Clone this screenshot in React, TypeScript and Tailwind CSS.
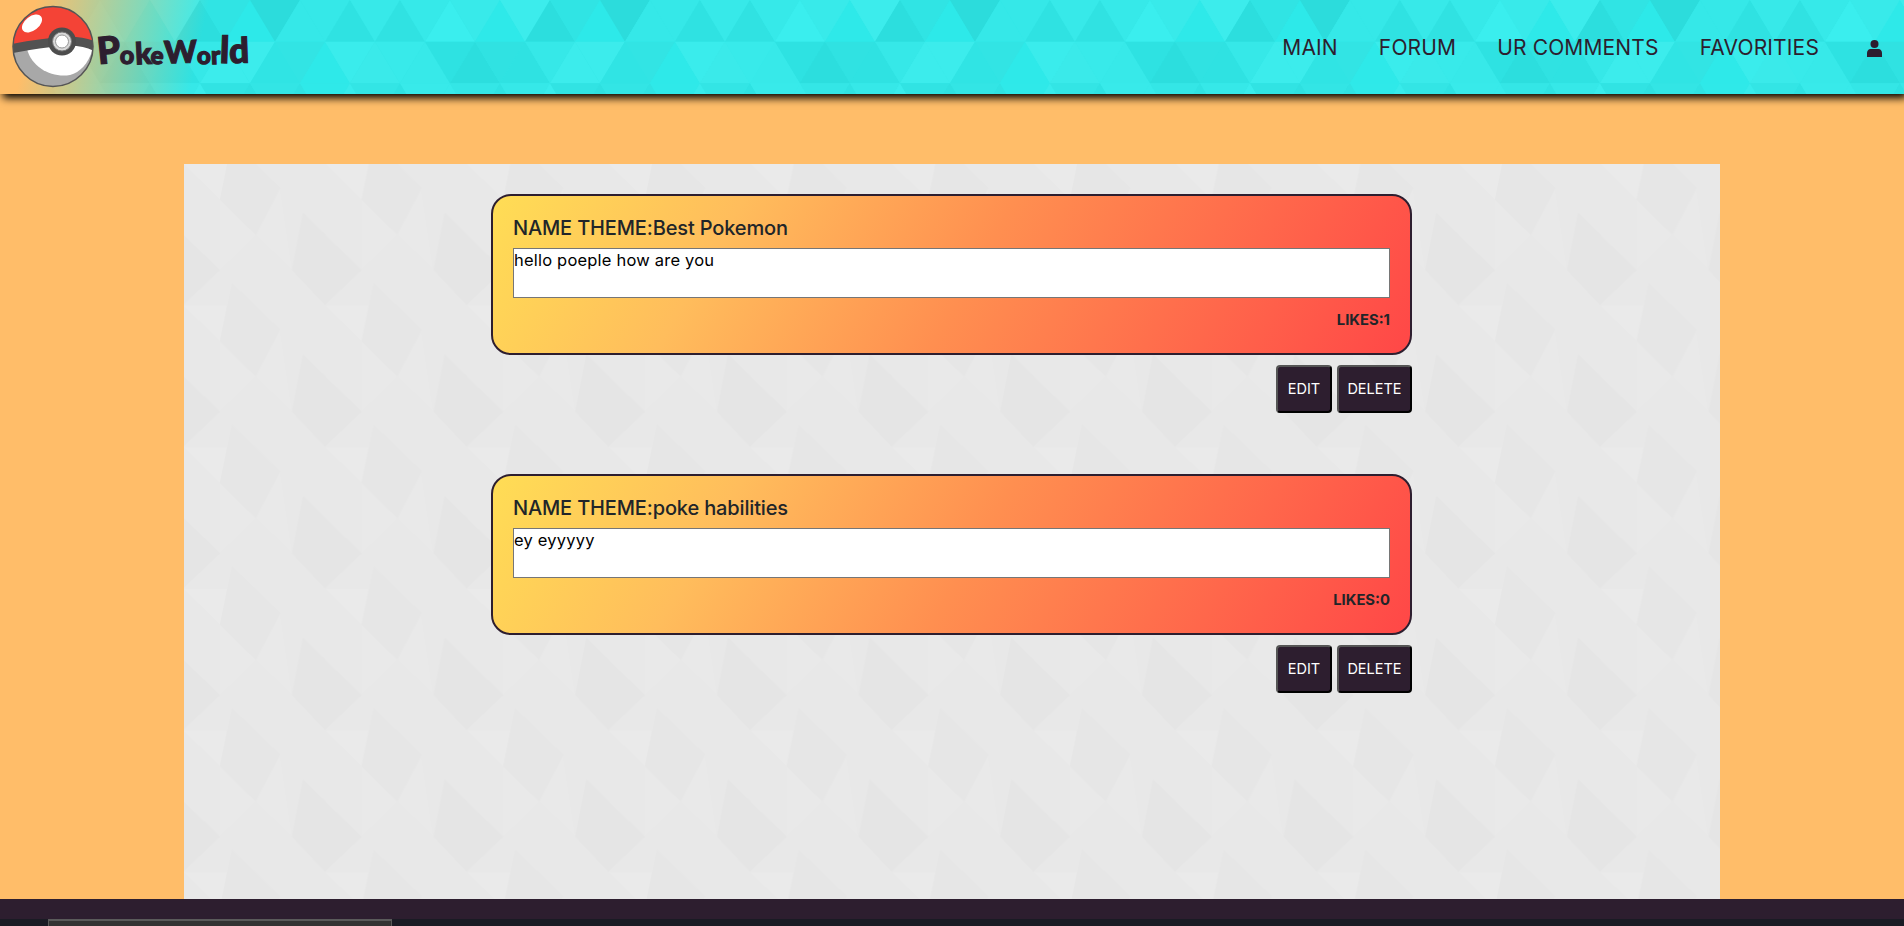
const NAV = ["MAIN", "FORUM", "UR COMMENTS", "FAVORITIES"];

const THEMES = [
  { name: "Best Pokemon", text: "hello poeple how are you", likes: 1 },
  { name: "poke habilities", text: "ey eyyyyy", likes: 0 },
];

const LETTERS = [
  { c: "P", cls: "text-[37px] -rotate-6" },
  { c: "o", cls: "text-[25px] rotate-3" },
  { c: "k", cls: "text-[30px] -rotate-3" },
  { c: "e", cls: "text-[24px] rotate-6" },
  { c: "W", cls: "text-[31px] -rotate-2" },
  { c: "o", cls: "text-[24px] rotate-2" },
  { c: "r", cls: "text-[25px] -rotate-2" },
  { c: "l", cls: "text-[37px] rotate-2" },
  { c: "d", cls: "text-[35px] -rotate-2" },
];

// header tile read off the reference: [up triangle, down triangle] per step, 7 steps wide
const TILE = [
  [
    ["#30e2e2", "#36e9e9"],
    ["#3aeeee", "#38eaea"],
    ["#2ee9e9", "#3cecec"],
    ["#2cdede", "#30e4e4"],
    ["#2de9e9", "#2cdcdc"],
    ["#35e8e8", "#35e8e8"],
    ["#2fe2e2", "#37e9e9"],
  ],
  [
    ["#3aeaea", "#38eaea"],
    ["#37e9e9", "#2ee2e2"],
    ["#2cdede", "#30e2e2"],
    ["#2fe2e2", "#36e8e8"],
    ["#3cecec", "#3cecec"],
    ["#30e4e4", "#32e4e4"],
    ["#2ee9e9", "#3aecec"],
  ],
  [
    ["#2fe2e2", "#38eaea"],
    ["#38eaea", "#34e6e6"],
    ["#30e2e2", "#36e8e8"],
    ["#3aecec", "#31e3e3"],
    ["#2fe0e0", "#33e5e5"],
    ["#30e2e2", "#2fe9e9"],
    ["#38ebeb", "#33e5e5"],
  ],
];

// header triangles, side 50 and height 41.67
function triangles() {
  const out: { points: string; fill: string }[] = [];
  const h = 125 / 3;
  for (let row = 0; row < 3; row++) {
    for (let i = -1; i < 40; i++) {
      const x = i * 50 - 25;
      const y0 = row * h;
      const y1 = y0 + h;
      const cell = TILE[row][(i + 76) % 7];
      if (row % 2 === 0) {
        out.push({ points: `${x},${y1} ${x + 25},${y0} ${x + 50},${y1}`, fill: cell[0] });
        out.push({ points: `${x + 25},${y0} ${x + 75},${y0} ${x + 50},${y1}`, fill: cell[1] });
      } else {
        out.push({ points: `${x - 25},${y1} ${x},${y0} ${x + 25},${y1}`, fill: cell[0] });
        out.push({ points: `${x},${y0} ${x + 50},${y0} ${x + 25},${y1}`, fill: cell[1] });
      }
    }
  }
  return out;
}

function HeaderPattern() {
  return (
    <svg viewBox="0 0 1904 94" className="absolute inset-0 w-full h-full" aria-hidden="true">
      <rect width="1904" height="94" fill="#33e6e6" />
      {Array.from({ length: 3 }).map((_, k) => (
        <g key={k} transform={`translate(${k * 700} 0)`}>
          {triangles().map((t, i) => (
            <polygon key={i} points={t.points} fill={t.fill} />
          ))}
        </g>
      ))}
    </svg>
  );
}

function PanelPattern() {
  return (
    <svg className="absolute inset-0 w-full h-full" aria-hidden="true">
      <defs>
        <pattern id="panel-tile" width="141.67" height="141.67" patternUnits="userSpaceOnUse">
          <rect width="142" height="142" fill="#e8e8e8" />
          <polygon points="0,0 36,36 43,0" fill="#eaeaea" />
          <polygon points="119,49 178,106 141,141 108,106" fill="#e5e5e5" />
          <polygon points="-23,49 36,106 -1,141 -34,106" fill="#e5e5e5" />
          <polygon points="48,-23 96,24 71,71 36,36" fill="#e6e6e6" />
          <polygon points="48,119 96,166 71,213 36,178" fill="#e6e6e6" />
          <polygon points="72,71 108,106 96,25" fill="#e9e9e9" />
          <polygon points="36,36 72,71 36,106" fill="#e9e9e9" />
        </pattern>
      </defs>
      <rect width="100%" height="100%" fill="url(#panel-tile)" />
    </svg>
  );
}

function Pokeball() {
  return (
    <svg viewBox="0 0 94 94" className="w-[94px] h-[94px] shrink-0" aria-hidden="true">
      <defs>
        <clipPath id="ball-clip">
          <circle cx="53" cy="46.5" r="40" />
        </clipPath>
      </defs>
      <g clipPath="url(#ball-clip)">
        <rect width="94" height="94" fill="#a8a8a8" />
        <path d="M0 0H94V48Q62 36 13 48H0Z" fill="#f44336" />
        <path d="M27 49C32 68 52 78 70 75C80 72 88 65 93 48L62 40Z" fill="#ffffff" />
        <path d="M10 49Q40 43 62 41.5T96 47" fill="none" stroke="#525252" strokeWidth="9" />
      </g>
      <ellipse cx="32" cy="23.5" rx="11.5" ry="7" transform="rotate(-38 32 23.5)" fill="#ffffff" />
      <circle cx="62" cy="41.5" r="14" fill="#4d4d4d" />
      <circle cx="62" cy="41.5" r="9.5" fill="#d8d8d8" stroke="#777777" strokeWidth="1" />
      <circle cx="62" cy="41.5" r="6.5" fill="#ffffff" stroke="#999999" strokeWidth="1" />
      <circle cx="53" cy="46.5" r="40" fill="none" stroke="#555555" strokeWidth="1.5" />
    </svg>
  );
}

function UserIcon() {
  return (
    <svg viewBox="0 0 15 17" className="w-[15px] h-[17px]" fill="#2d1e2f" aria-hidden="true">
      <circle cx="7.5" cy="4" r="4" />
      <path d="M3.5 9H11.5C13.5 9 15 11 15 13V17H0V13C0 11 1.5 9 3.5 9Z" />
    </svg>
  );
}

function ThemeCard({ name, text, likes }: { name: string; text: string; likes: number }) {
  return (
    <div className="flex flex-col w-[921px]">
      <div className="flex flex-col h-[161px] px-[20px] pt-[19px] rounded-[20px] border-2 border-[#2d1e2f] bg-[linear-gradient(120deg,#ffdd55_0%,#ffbd5c_25%,#ff8f50_52%,#ff4747_100%)]">
        <h3 className="h-[33px] text-[20px] leading-[26px] font-medium tracking-[-0.15px] text-[#212529]">
          NAME THEME:{name}
        </h3>
        <textarea
          readOnly
          value={text}
          className="block w-full h-[50px] resize-none border border-[#767676] bg-white text-[16.5px] leading-[22px] tracking-[0.2px] text-black outline-none"
        />
        <p className="mt-[11px] text-right text-[14.8px] leading-[22px] font-bold text-[#212529]">
          LIKES:{likes}
        </p>
      </div>
      <div className="flex justify-end gap-[5px] mt-[10px]">
        <button className="h-[48px] w-[56px] rounded-[4px] border-2 border-t-[#555555] border-l-[#555555] border-b-black border-r-black bg-[#2d1e2f] text-[14.5px] text-white">
          EDIT
        </button>
        <button className="h-[48px] w-[75px] rounded-[4px] border-2 border-t-[#555555] border-l-[#555555] border-b-black border-r-black bg-[#2d1e2f] text-[14.5px] text-white">
          DELETE
        </button>
      </div>
    </div>
  );
}

export default function App() {
  return (
    <div className="flex flex-col h-screen overflow-hidden bg-[#ffbd69] font-['Inter','Liberation_Sans',sans-serif]">
      <header className="relative z-10 flex items-center justify-between shrink-0 h-[94px] pr-[22px] shadow-[3px_4px_8px_#000]">
        <HeaderPattern />
        <div className="absolute inset-0 bg-[linear-gradient(102deg,#ffbd69_35px,#ffbd6900_205px)]" />
        <div className="relative flex items-center">
          <Pokeball />
          <div className="flex items-end h-[42px] -mt-[3px] ml-[3px] font-['Lato',sans-serif] font-black text-[#2d1e2f] leading-none [-webkit-text-stroke:1.2px_#2d1e2f]">
            {LETTERS.map((l, i) => (
              <span key={i} className={`inline-block ${l.cls}`}>
                {l.c}
              </span>
            ))}
          </div>
        </div>
        <nav className="relative flex items-center pt-[2px] text-[21px] font-normal tracking-[0.15px] text-[#2d1e2f]">
          <div className="flex items-center gap-[41px]">
            {NAV.map((item) => (
              <a key={item} href="#">
                {item}
              </a>
            ))}
          </div>
          <a href="#" className="ml-[48px]">
            <UserIcon />
          </a>
        </nav>
      </header>

      <main className="flex flex-col flex-1 min-h-0 px-[184px] pt-[70px]">
        <section className="relative flex flex-col flex-1 items-center gap-[61px] pt-[30px] pr-[1px] rounded-t-[2px]">
          <PanelPattern />
          {THEMES.map((t) => (
            <div key={t.name} className="relative">
              <ThemeCard {...t} />
            </div>
          ))}
        </section>
      </main>

      <footer className="shrink-0">
        <div className="h-[20px] bg-[#2d1e2f]" />
        <div className="relative h-[7px] bg-[#1a1b24]">
          <div className="absolute left-[48px] top-0 w-[344px] h-[7px] border-t-2 border-x border-[#5a5a5a] bg-[#333333]" />
        </div>
      </footer>
    </div>
  );
}
